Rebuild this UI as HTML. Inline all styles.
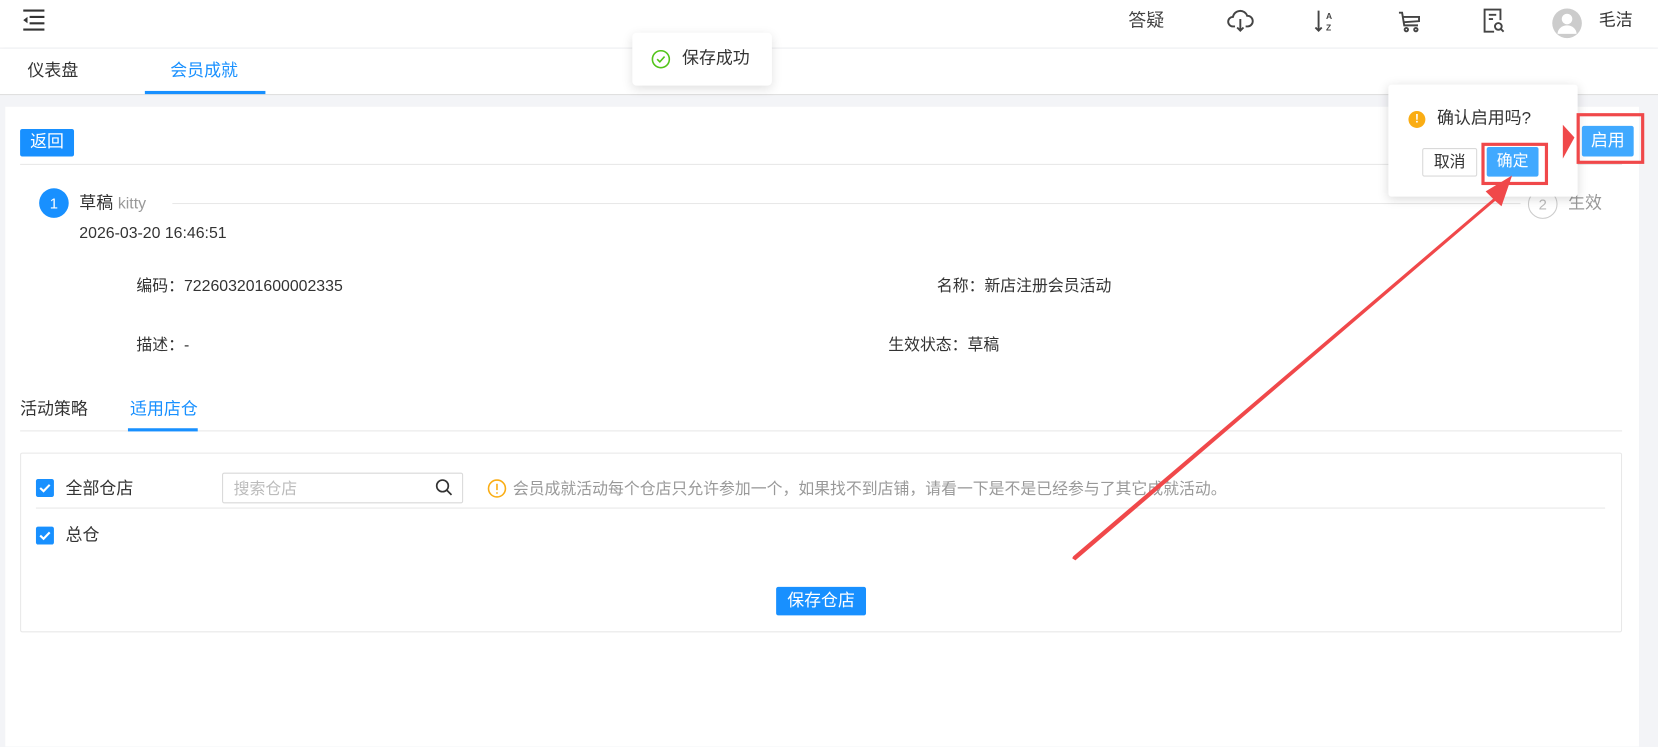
<!DOCTYPE html>
<html><head><meta charset="utf-8"><style>
*{margin:0;padding:0;box-sizing:border-box}
body{width:1658px;height:706px;overflow:hidden;background:#f3f4f7;font-family:"Liberation Sans","Noto Sans CJK SC",sans-serif;color:#333;font-size:15px;position:relative;line-height:1.15}
#w{position:absolute;left:0;top:0;width:1568px;height:668px;transform:scale(1.05740);transform-origin:0 0}
.abs{position:absolute}
.hdr{left:0;top:0;width:1568px;height:45px;background:#fff;box-shadow:0 2px 6px rgba(0,0,0,.06)}
.tabs{left:0;top:46px;width:1568px;height:44px;background:#fff;border-bottom:1px solid #ddd}
.card{left:5px;top:101px;width:1545px;height:605px;background:#fff}
.btn{background:#1890ff;color:#fff;border-radius:2px;font-size:15px;text-align:center}
.cb{width:17px;height:17px;background:#1890ff;border-radius:2px}
</style></head><body><div id="w">
<div class="abs hdr"></div>
<svg class="abs" style="left:20px;top:8px" width="24" height="22" viewBox="0 0 24 22"><path d="M2 2H22M8 8H22M8 14H22M2 20H22" stroke="#333" stroke-width="2"/><path d="M2 11L6 8V14Z" fill="#333"/></svg>
<div class="abs" style="left:1067px;top:10px;font-size:17px;color:#444">答疑</div>
<svg class="abs" style="left:1160px;top:8px" width="26" height="24" viewBox="0 0 26 24" fill="none" stroke="#444" stroke-width="1.8"><path d="M8 17H6A4.5 4.5 0 0 1 6 8A7 7 0 0 1 19.5 7A5 5 0 0 1 20 17H18"/><path d="M13 10V21M10 18L13 21L16 18"/></svg>
<svg class="abs" style="left:1242px;top:8px" width="22" height="24" viewBox="0 0 22 24"><path d="M5 2V21M2 18L5 21L8 18" stroke="#444" stroke-width="1.8" fill="none"/><text x="12" y="10" font-size="8" font-family="Liberation Sans" fill="#444" font-weight="bold">A</text><text x="12" y="21" font-size="8" font-family="Liberation Sans" fill="#444" font-weight="bold">Z</text></svg>
<svg class="abs" style="left:1322px;top:10px" width="22" height="22" viewBox="0 0 22 22" fill="none" stroke="#444" stroke-width="1.8"><path d="M1 2H4L6 14H19M5 6H20V10L6 11"/><circle cx="8" cy="18" r="1.6"/><circle cx="17" cy="18" r="1.6"/></svg>
<svg class="abs" style="left:1402px;top:7px" width="22" height="26" viewBox="0 0 22 26" fill="none" stroke="#444" stroke-width="1.8"><path d="M11 23H2V2H17V12"/><path d="M6 7H13M6 11H10"/><circle cx="15" cy="18" r="3.2"/><path d="M17.3 20.3L20 23"/></svg>
<svg class="abs" style="left:1467px;top:7px" width="30" height="30" viewBox="0 0 30 30"><circle cx="15" cy="15" r="14" fill="#ccc"/><circle cx="15" cy="11" r="5" fill="#fff"/><path d="M6 25A9 8 0 0 1 24 25Z" fill="#fff"/></svg>
<div class="abs" style="left:1512px;top:11px;font-size:16px;color:#333">毛洁</div>
<div class="abs tabs"></div>
<div class="abs" style="left:26px;top:59px;font-size:16px;color:#333">仪表盘</div>
<div class="abs" style="left:161px;top:59px;font-size:16px;color:#1890ff">会员成就</div>
<div class="abs" style="left:137px;top:86px;width:114px;height:3px;background:#1890ff"></div>
<div class="abs" style="left:598px;top:31px;width:132px;height:50px;background:#fff;border-radius:4px;box-shadow:0 3px 10px rgba(0,0,0,.12)"></div>
<svg class="abs" style="left:616px;top:47px" width="18" height="18" viewBox="0 0 18 18" fill="none" stroke="#52c41a" stroke-width="1.5"><circle cx="9" cy="9" r="8"/><path d="M5.5 9L8 11.5L12.5 6.5"/></svg>
<div class="abs" style="left:645px;top:47px;font-size:16px;color:#333">保存成功</div>
<div class="abs card"></div>
<div class="abs btn" style="left:19px;top:122px;width:51px;height:26px;line-height:26px;font-size:16px">返回</div>
<div class="abs" style="left:19px;top:155px;width:1515px;height:1px;background:#e8e8e8"></div>
<div class="abs" style="left:37px;top:178px;width:28px;height:28px;border-radius:50%;background:#1890ff;color:#fff;text-align:center;line-height:28px;font-size:14px">1</div>
<div class="abs" style="left:75px;top:184px;font-size:16px">草稿 <span style="color:#999;font-size:15px">kitty</span></div>
<div class="abs" style="left:163px;top:192px;width:1275px;height:1px;background:#e8e8e8"></div>
<div class="abs" style="left:1445px;top:179px;width:28px;height:28px;border-radius:50%;border:1px solid #ccc;color:#bbb;text-align:center;line-height:26px;font-size:14px">2</div>
<div class="abs" style="left:1483px;top:184px;font-size:16px;color:#999">生效</div>
<div class="abs" style="left:75px;top:212px;font-size:15px">2026-03-20 16:46:51</div>
<div class="abs" style="left:129px;top:262px">编码：722603201600002335</div>
<div class="abs" style="left:886px;top:262px">名称：新店注册会员活动</div>
<div class="abs" style="left:129px;top:318px">描述：-</div>
<div class="abs" style="left:840px;top:318px">生效状态：草稿</div>
<div class="abs" style="left:19px;top:379px;font-size:16px">活动策略</div>
<div class="abs" style="left:123px;top:379px;font-size:16px;color:#1890ff">适用店仓</div>
<div class="abs" style="left:19px;top:407px;width:1515px;height:1px;background:#e8e8e8"></div>
<div class="abs" style="left:121px;top:405px;width:66px;height:3px;background:#1890ff"></div>
<div class="abs" style="left:19px;top:428px;width:1515px;height:170px;border:1px solid #e8e8e8;border-radius:2px"></div>
<svg class="abs cb" style="left:34px;top:453px" viewBox="0 0 17 17"><path d="M4 8.5L7.2 11.5L13 5.5" stroke="#fff" stroke-width="2" fill="none"/></svg>
<div class="abs" style="left:62px;top:454px;font-size:16px">全部仓店</div>
<div class="abs" style="left:210px;top:447px;width:228px;height:29px;border:1px solid #d9d9d9;border-radius:2px"></div>
<div class="abs" style="left:221px;top:454px;color:#bbb">搜索仓店</div>
<svg class="abs" style="left:411px;top:452px" width="18" height="18" viewBox="0 0 18 18" fill="none" stroke="#333" stroke-width="1.6"><circle cx="7.5" cy="7.5" r="5.5"/><path d="M11.5 11.5L16 16"/></svg>
<svg class="abs" style="left:461px;top:453px" width="18" height="18" viewBox="0 0 18 18" fill="none" stroke="#faad14" stroke-width="1.5"><circle cx="9" cy="9" r="8"/><path d="M9 4.5V10.5M9 12.5V14"/></svg>
<div class="abs" style="left:485px;top:454px;color:#999">会员成就活动每个仓店只允许参加一个，如果找不到店铺，请看一下是不是已经参与了其它成就活动。</div>
<div class="abs" style="left:34px;top:480px;width:1484px;height:1px;background:#e8e8e8"></div>
<svg class="abs cb" style="left:34px;top:498px" viewBox="0 0 17 17"><path d="M4 8.5L7.2 11.5L13 5.5" stroke="#fff" stroke-width="2" fill="none"/></svg>
<div class="abs" style="left:62px;top:498px;font-size:16px">总仓</div>
<div class="abs btn" style="left:734px;top:555px;width:85px;height:27px;line-height:27px;font-size:16px">保存仓店</div>
<div class="abs" style="left:1313px;top:80px;width:179px;height:106px;background:#fff;border-radius:3px;box-shadow:0 2px 10px rgba(0,0,0,.15)"></div>
<div class="abs" style="left:1332px;top:105px;width:16px;height:16px;border-radius:50%;background:#faad14;color:#fff;font-size:11px;text-align:center;line-height:16px;font-weight:bold">!</div>
<div class="abs" style="left:1359px;top:104px;font-size:16px">确认启用吗?</div>
<div class="abs" style="left:1345px;top:140px;width:52px;height:27px;border:1px solid #d9d9d9;border-radius:2px;text-align:center;line-height:25px;font-size:15px">取消</div>
<div class="abs btn" style="left:1406px;top:139px;width:49px;height:28px;line-height:28px;background:#40a9ff">确定</div>
<div class="abs" style="left:1401px;top:135px;width:63px;height:40px;border:3px solid #f0484a"></div>
<div class="abs btn" style="left:1496px;top:119px;width:49px;height:29px;line-height:29px;background:#40a9ff;font-size:16px">启用</div>
<div class="abs" style="left:1491px;top:107px;width:64px;height:48px;border:3px solid #f0484a"></div>
<svg class="abs" style="left:0;top:0" width="1568" height="668"><path d="M1478 118L1489 130L1478 150Z" fill="#f0484a"/><path d="M1014 528L1015 526L1412 188L1405 181L1430 166L1420 195L1414 190L1017 530Z" fill="#f0484a"/></svg>
</div></body></html>
